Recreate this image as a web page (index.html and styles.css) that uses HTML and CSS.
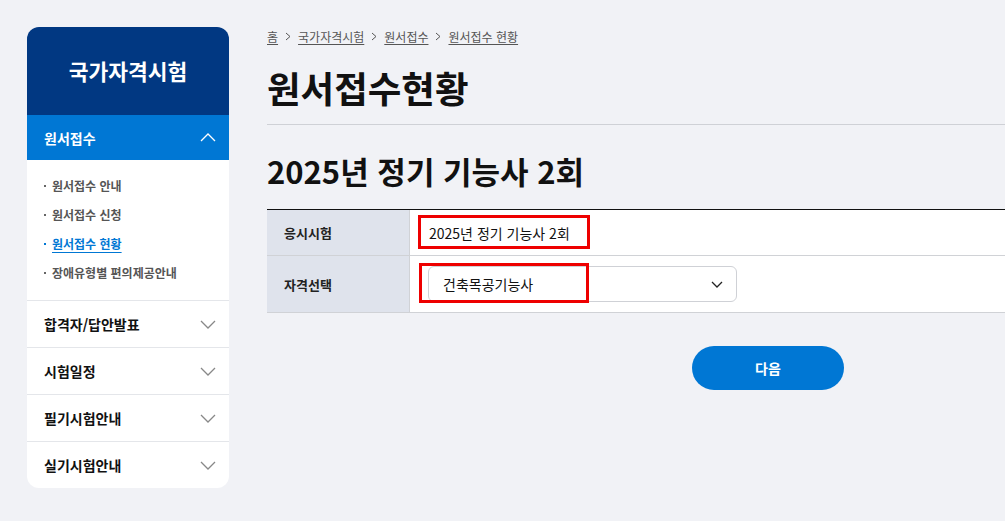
FILE: index.html
```html
<!DOCTYPE html>
<html lang="ko">
<head>
<meta charset="utf-8">
<title>원서접수현황</title>
<link rel="stylesheet" href="styles.css">
</head>
<body>
<div class="page">
  <aside class="sidebar">
    <div class="side-head">국가자격시험</div>
    <div class="menu-active">
      <span>원서접수</span>
      <svg class="chev" width="16" height="9" viewBox="0 0 16 9"><path d="M1 8 L8 1 L15 8" fill="none" stroke="#fff" stroke-width="1.3"/></svg>
    </div>
    <ul class="submenu">
      <li>원서접수 안내</li>
      <li>원서접수 신청</li>
      <li class="on">원서접수 현황</li>
      <li>장애유형별 편의제공안내</li>
    </ul>
    <div class="menu-item"><span>합격자/답안발표</span><svg class="chev" width="16" height="9" viewBox="0 0 16 9"><path d="M1 1 L8 8 L15 1" fill="none" stroke="#888" stroke-width="1.3"/></svg></div>
    <div class="menu-item"><span>시험일정</span><svg class="chev" width="16" height="9" viewBox="0 0 16 9"><path d="M1 1 L8 8 L15 1" fill="none" stroke="#888" stroke-width="1.3"/></svg></div>
    <div class="menu-item"><span>필기시험안내</span><svg class="chev" width="16" height="9" viewBox="0 0 16 9"><path d="M1 1 L8 8 L15 1" fill="none" stroke="#888" stroke-width="1.3"/></svg></div>
    <div class="menu-item"><span>실기시험안내</span><svg class="chev" width="16" height="9" viewBox="0 0 16 9"><path d="M1 1 L8 8 L15 1" fill="none" stroke="#888" stroke-width="1.3"/></svg></div>
  </aside>

  <main class="main">
    <nav class="crumbs">
      <a>홈</a>
      <svg class="sep" width="6" height="9" viewBox="0 0 6 9"><path d="M1 1 L5 4.5 L1 8" fill="none" stroke="#555" stroke-width="1"/></svg>
      <a>국가자격시험</a>
      <svg class="sep" width="6" height="9" viewBox="0 0 6 9"><path d="M1 1 L5 4.5 L1 8" fill="none" stroke="#555" stroke-width="1"/></svg>
      <a>원서접수</a>
      <svg class="sep" width="6" height="9" viewBox="0 0 6 9"><path d="M1 1 L5 4.5 L1 8" fill="none" stroke="#555" stroke-width="1"/></svg>
      <a>원서접수 현황</a>
    </nav>
    <h1 class="title">원서접수현황</h1>
    <h2 class="subtitle">2025년 정기 기능사 2회</h2>

    <div class="form-table">
      <div class="row row1">
        <div class="label">응시시험</div>
        <div class="value">
          <span>2025년 정기 기능사 2회</span>
          <div class="mark mark1"></div>
        </div>
      </div>
      <div class="row row2">
        <div class="label">자격선택</div>
        <div class="value">
          <div class="select">
            <span>건축목공기능사</span>
            <svg width="12" height="7" viewBox="0 0 12 7"><path d="M1 1 L6 6 L11 1" fill="none" stroke="#222" stroke-width="1.3"/></svg>
          </div>
          <div class="mark mark2"></div>
        </div>
      </div>
    </div>

    <div class="actions">
      <button class="btn">다음</button>
    </div>
  </main>
</div>
</body>
</html>
```

FILE: styles.css
```css
html, body {
  margin: 0;
  padding: 0;
  overflow: hidden;
}
body {
  background: #f1f2f6;
  font-family: "Noto Sans CJK KR", "Noto Sans", sans-serif;
  color: #111;
}
.page {
  display: flex;
  align-items: flex-start;
  padding: 27px 0 0 27px;
  gap: 38px;
}
.sidebar {
  width: 202px;
  flex: none;
  background: #fff;
  border-radius: 12px;
  overflow: hidden;
}
.side-head {
  height: 88px;
  background: #013882;
  color: #fff;
  font-size: 21.5px;
  font-weight: 700;
  display: flex;
  align-items: center;
  justify-content: center;
  padding-bottom: 2px;
  box-sizing: border-box;
}
.menu-active {
  height: 45px;
  background: #0077d4;
  color: #fff;
  font-size: 14px;
  font-weight: 700;
  display: flex;
  align-items: center;
  justify-content: space-between;
  padding: 0 13px 0 17px;
}
.submenu {
  list-style: none;
  margin: 0;
  padding: 11px 0 13px 17px;
}
.submenu li {
  height: 29px;
  line-height: 29px;
  font-size: 12px;
  font-weight: 700;
  color: #555;
  display: flex;
  align-items: center;
  gap: 6px;
}
.submenu li::before {
  content: "";
  width: 2px;
  height: 2px;
  background: #666;
}
.submenu li.on {
  color: #0077d4;
  text-decoration: underline;
  text-underline-offset: 3px;
}
.submenu li.on::before {
  background: #0077d4;
}
.menu-item {
  height: 46px;
  border-top: 1px solid #e4e6ea;
  display: flex;
  align-items: center;
  justify-content: space-between;
  padding: 0 13px 0 17px;
  font-size: 14px;
  font-weight: 700;
  color: #111;
}
.main {
  width: 1002px;
  flex: none;
}
.crumbs {
  display: flex;
  align-items: center;
  gap: 7px;
  height: 18px;
  font-size: 12px;
  color: #555;
}
.crumbs a {
  text-decoration: underline;
  text-underline-offset: 2px;
}
.title {
  margin: 21px 0 0;
  font-size: 36.5px;
  line-height: 44px;
  font-weight: 700;
  padding-bottom: 14px;
  border-bottom: 1px solid #cfd1d6;
}
.subtitle {
  margin: 26px 0 0;
  font-size: 31px;
  line-height: 40px;
  font-weight: 700;
}
.form-table {
  margin-top: 18px;
  border-top: 1px solid #111;
  background: #fff;
}
.row {
  display: flex;
  border-bottom: 1px solid #d0d2d6;
}
.row1 { height: 45px; }
.row2 { height: 56px; }
.label {
  width: 125px;
  padding-left: 17px;
  background: #dfe3ec;
  border-right: 1px solid #d0d2d6;
  display: flex;
  align-items: center;
  font-size: 13px;
  font-weight: 700;
  color: #222;
}
.value {
  position: relative;
  flex: 1;
  display: flex;
  align-items: center;
  padding-left: 18px;
  font-size: 14px;
  color: #111;
}
.row1 .value span { padding-left: 1px; }
.select {
  box-sizing: border-box;
  width: 309px;
  height: 36px;
  border: 1px solid #cfd1d6;
  border-radius: 6px;
  display: flex;
  align-items: center;
  justify-content: space-between;
  padding: 0 13px 0 14px;
  font-size: 14px;
}
.mark {
  position: absolute;
  border: 3px solid #ee0000;
  box-sizing: border-box;
}
.mark1 {
  left: 8px;
  top: 5px;
  width: 172px;
  height: 34px;
}
.mark2 {
  left: 9px;
  top: 7px;
  width: 170px;
  height: 40px;
}
.actions {
  display: flex;
  justify-content: center;
  margin-top: 33px;
}
.btn {
  width: 152px;
  height: 44px;
  border: none;
  border-radius: 22px;
  background: #0077d4;
  color: #fff;
  font-family: inherit;
  font-size: 14px;
  font-weight: 700;
}
```
